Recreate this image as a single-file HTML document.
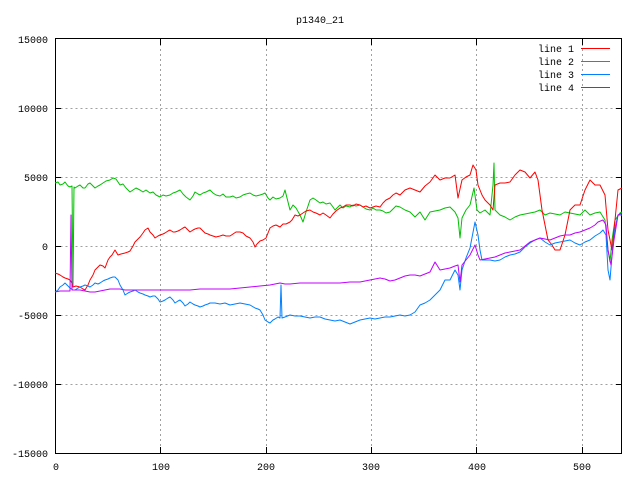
<!DOCTYPE html>
<html><head><meta charset="utf-8"><style>
body{margin:0;background:#fff}
svg{display:block}
text{font-family:"Liberation Mono","DejaVu Sans Mono",monospace;font-size:10px;fill:#000}
</style></head><body>
<svg width="640" height="480" viewBox="0 0 640 480" xmlns="http://www.w3.org/2000/svg">
<rect width="640" height="480" fill="#fff"/>
<g stroke="#a0a0a0" stroke-width="1" stroke-dasharray="2,3" fill="none">
<path d="M55.5 108.5H621.5M55.5 177.5H621.5M55.5 246.5H621.5M55.5 315.5H621.5M55.5 384.5H621.5"/>
<path d="M160.5 39V453M266.5 39V453M371.5 39V453M476.5 39V453M582.5 39V453"/>
</g>
<g stroke="#000" stroke-width="1" fill="none">
<rect x="55.5" y="38.5" width="566" height="415"/>
<path d="M55 108.5h6M55 177.5h6M55 246.5h6M55 315.5h6M55 384.5h6M622 108.5h-6M622 177.5h-6M622 246.5h-6M622 315.5h-6M622 384.5h-6"/>
<path d="M160.5 453v-6M266.5 453v-6M371.5 453v-6M476.5 453v-6M582.5 453v-6M160.5 39v6M266.5 39v6M371.5 39v6M476.5 39v6M582.5 39v6"/>
</g>
<text x="320" y="23" text-anchor="middle">p1340_21</text>
<g text-anchor="end">
<text x="48" y="43">15000</text><text x="48" y="112">10000</text><text x="48" y="181">5000</text><text x="48" y="250">0</text><text x="48" y="319">-5000</text><text x="48" y="388">-10000</text><text x="48" y="457">-15000</text>
</g>
<g text-anchor="middle">
<text x="56" y="470">0</text><text x="161" y="470">100</text><text x="266" y="470">200</text><text x="371" y="470">300</text><text x="477" y="470">400</text><text x="582" y="470">500</text>
</g>
<g text-anchor="end">
<text x="574" y="52">line 1</text><text x="574" y="65">line 2</text><text x="574" y="78">line 3</text><text x="574" y="91">line 4</text>
</g>
<path d="M581 48.5h29" stroke="#ff0000"/>
<path d="M581 61.5h29" stroke="#00c000"/>
<path d="M581 74.5h29" stroke="#0080ff"/>
<path d="M581 87.5h29" stroke="#c000ff"/>
<g fill="none" stroke-width="1" stroke-linejoin="round">
<polyline stroke="#00c000" points="55,183 58,182 60,185 63,184 65,182 68,186 70,187 72,186 73,287 74,187 75,188 78,186 80,185 83,188 85,188 88,184 90,183 93,186 95,188 98,186 100,185 103,183 106,181 110,180 113,178 116,179 120,185 123,184 126,188 130,192 133,190 136,188 140,190 143,192 146,190 150,193 153,192 156,195 160,197 163,195 166,196 170,195 173,193 176,192 180,190 183,194 186,197 190,200 193,196 195,192 198,194 200,195 203,193 206,192 210,190 213,193 216,195 220,196 223,194 226,197 230,197 233,196 236,198 240,197 243,195 246,194 250,193 253,195 256,196 260,195 263,194 265,193 268,198 270,200 273,197 276,199 280,198 283,196 285,190 287,198 290,210 293,205 296,208 300,215 303,222 306,212 310,200 313,198 316,200 320,203 323,202 326,204 330,203 333,207 335,210 338,207 340,205 343,208 346,206 350,207 353,205 356,206 360,205 363,207 366,209 370,210 373,208 376,210 380,210 383,211 386,213 390,212 393,209 396,206 400,207 405,210 410,212 415,217 420,212 425,220 430,212 435,211 440,210 445,208 450,207 455,212 458,218 460,238 462,218 466,210 470,205 474,188 477,210 480,213 485,210 490,215 493,185 494,163 495,210 500,215 505,217 510,220 515,217 520,215 525,214 530,213 535,212 540,210 545,215 550,213 555,214 560,215 565,212 570,213 575,214 580,215 585,210 590,215 595,213 600,212 605,220 608,250 610,262 612,240 615,220 620,213 622,212"/>
<polyline stroke="#ff0000" points="55,273 58,274 60,275 63,277 65,278 68,279 70,280 72,283 73,287 76,286 80,287 83,289 85,290 88,285 90,280 93,275 95,270 98,267 100,265 103,266 105,268 108,260 110,257 112,255 115,250 118,255 121,254 125,253 128,252 130,251 133,246 135,242 138,239 140,237 143,233 145,230 148,228 150,232 153,235 155,238 158,236 160,235 163,234 165,233 168,231 170,230 173,232 175,232 178,231 180,230 183,228 185,227 188,230 190,232 193,230 195,229 198,228 200,228 203,231 205,233 208,234 210,235 213,236 216,237 220,236 223,235 226,236 230,236 233,234 236,232 240,232 243,233 246,236 250,238 253,242 255,247 257,244 260,241 263,240 266,238 270,228 273,226 276,225 280,227 283,224 286,224 290,222 292,220 295,215 298,216 300,215 303,213 306,211 310,210 313,212 316,213 320,215 323,213 326,215 330,218 333,214 336,211 340,208 343,207 346,205 350,205 353,206 356,204 360,205 363,207 366,206 370,208 373,207 376,206 380,207 383,203 386,200 390,198 393,195 396,193 400,195 405,190 410,188 415,190 420,192 425,186 430,182 435,175 440,180 445,178 450,178 455,175 458,198 462,180 466,177 470,175 473,165 476,170 478,185 482,195 485,200 490,205 493,210 495,185 500,183 505,183 510,182 515,175 520,170 525,172 530,178 535,172 538,180 542,210 545,225 548,240 552,245 555,250 560,250 565,235 570,210 575,205 580,205 585,190 590,180 595,185 600,185 605,195 608,230 612,250 615,220 618,190 622,188"/>
<polyline stroke="#0080ff" points="55,292 58,290 60,287 63,285 65,283 68,286 70,288 73,290 75,290 78,288 80,287 83,286 85,285 88,286 90,287 93,285 95,283 98,284 100,283 103,281 105,280 108,279 110,278 113,277 115,277 118,280 120,285 123,290 125,295 128,293 130,292 133,291 135,290 138,292 140,293 143,294 145,295 148,296 150,297 153,296 155,296 158,299 160,302 163,301 165,300 168,298 170,297 173,300 175,303 178,301 180,300 183,303 185,306 188,304 190,302 193,304 195,305 198,306 200,307 203,306 205,305 208,304 210,303 215,303 220,304 225,303 230,305 235,304 240,303 245,304 250,305 255,308 258,309 260,310 263,315 265,320 268,322 270,323 273,320 275,319 278,317 280,318 281,285 282,318 285,317 290,315 295,316 300,316 305,317 310,318 315,317 320,317 325,319 330,320 335,321 340,320 345,322 350,324 355,322 360,320 365,319 370,318 375,319 380,318 385,317 390,317 395,316 400,315 405,316 410,315 415,312 420,305 425,303 430,300 435,295 440,290 445,280 450,280 455,270 458,275 460,290 462,270 466,258 470,248 475,222 478,235 480,250 482,260 486,260 490,260 495,261 500,260 505,257 510,255 515,254 520,252 525,247 530,243 535,240 540,238 545,242 550,245 555,243 560,242 565,241 570,240 575,243 580,245 585,242 590,240 595,236 600,233 603,230 606,235 608,270 610,280 612,255 615,228 618,215 622,215"/>
<polyline stroke="#c000ff" points="55,292 60,291 65,291 70,291 71,215 72,290 73,290 80,290 85,291 90,292 95,292 100,291 105,290 110,289 115,289 120,289 125,290 130,290 135,290 140,290 150,290 160,290 170,290 180,290 190,290 200,289 210,289 220,289 230,289 240,288 250,287 260,286 270,285 280,283 285,284 290,284 300,283 310,283 320,283 330,283 340,283 350,282 360,282 365,281 370,280 375,279 380,278 385,279 390,281 395,280 400,278 405,276 410,275 415,275 420,276 425,274 430,272 435,262 440,270 445,269 450,268 455,266 458,265 460,282 462,265 466,260 470,255 475,245 478,255 480,260 485,259 490,258 495,257 500,255 505,253 510,252 515,251 520,250 525,246 530,242 535,240 540,238 545,239 550,240 555,238 560,236 565,235 570,235 575,233 580,232 585,230 590,228 595,225 598,222 603,220 606,225 608,250 611,265 614,240 618,215 622,213"/>
</g>
</svg>
</body></html>
